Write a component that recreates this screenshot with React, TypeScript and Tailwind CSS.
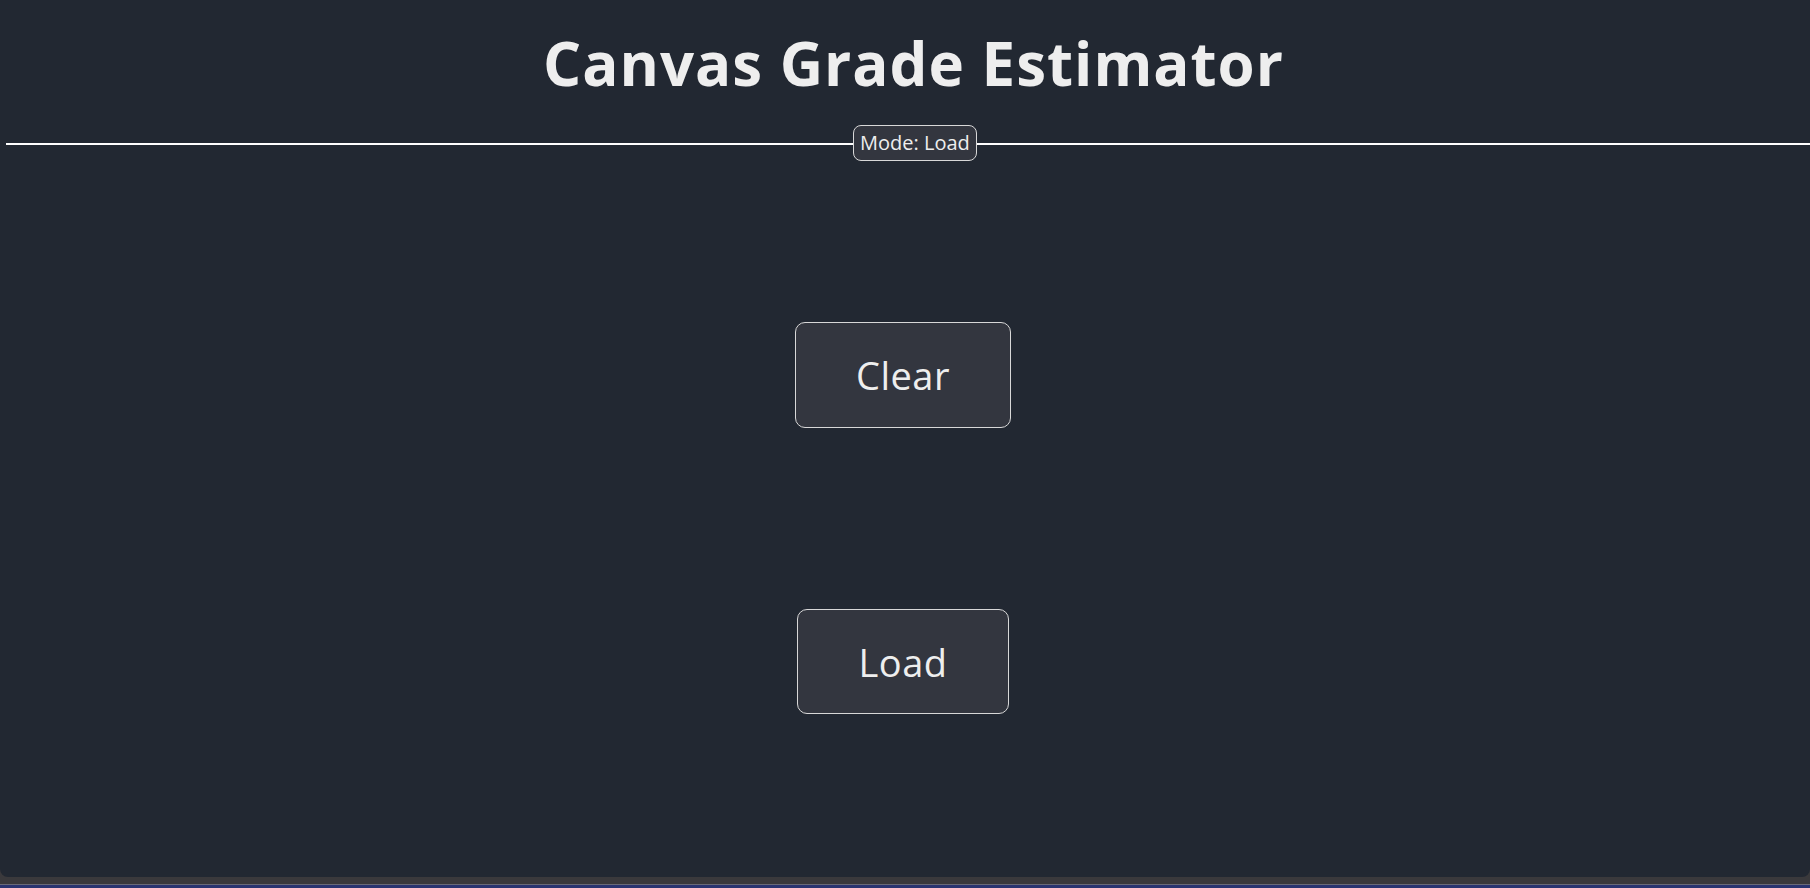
import { useState } from 'react';

type Mode = 'Load' | 'Clear';

export default function App() {
  const [mode, setMode] = useState<Mode>('Load');

  return (
    <div className="h-[888px] w-full overflow-hidden bg-[#3a393c] font-['Open_Sans',sans-serif] text-[#eeeeee]">
      <main className="flex h-[877px] flex-col items-center rounded-b-[8px] bg-[#222832]">
        {/* Header */}
        <h1 className="pl-[17px] pt-[22px] text-[60px] font-bold leading-[82px] tracking-[1px]">Canvas Grade Estimator</h1>

        {/* Mode divider */}
        <div className="mt-[21px] flex h-[36px] w-full items-center pl-[6px]">
          <div className="mt-[2px] h-[2px] w-[847px] bg-white" />
          <span className="flex h-[36px] items-center rounded-[8px] border border-[#d8d8d8] bg-[#33363f] px-[6px] text-[20px] leading-none">
            Mode: {mode}
          </span>
          <div className="mt-[2px] h-[2px] flex-1 bg-white" />
        </div>

        {/* Actions */}
        <div className="mt-[161px] flex w-full flex-col items-center gap-[181px] pr-[4px]">
          <button
            onClick={() => setMode('Clear')}
            className="flex h-[106px] items-center rounded-[10px] border border-[#d8d8d8] bg-[#33363f] px-[60px] text-[38px] leading-none tracking-[0.5px]"
          >
            Clear
          </button>
          <button
            onClick={() => setMode('Load')}
            className="flex h-[105px] items-center rounded-[10px] border border-[#d8d8d8] bg-[#33363f] px-[60px] text-[38px] leading-none tracking-[0.5px]"
          >
            Load
          </button>
        </div>
      </main>
      <div className="mt-[7px] h-[1px] bg-[#6a6a78]" />
      <div className="h-[3px] bg-[#2a3470]" />
    </div>
  );
}
